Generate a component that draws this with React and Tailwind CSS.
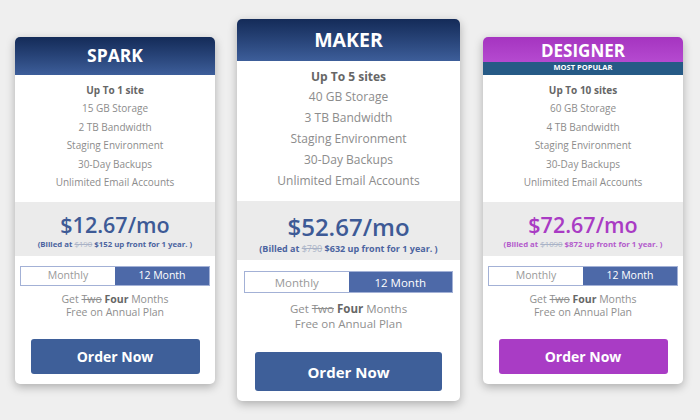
const plans = [
  {
    name: "SPARK",
    sites: "Up To 1 site",
    features: ["15 GB Storage", "2 TB Bandwidth", "Staging Environment", "30-Day Backups", "Unlimited Email Accounts"],
    price: "$12.67/mo",
    was: "$190",
    now: "$152",
  },
  {
    name: "MAKER",
    sites: "Up To 5 sites",
    features: ["40 GB Storage", "3 TB Bandwidth", "Staging Environment", "30-Day Backups", "Unlimited Email Accounts"],
    price: "$52.67/mo",
    was: "$790",
    now: "$632",
    big: true,
  },
  {
    name: "DESIGNER",
    sites: "Up To 10 sites",
    features: ["60 GB Storage", "4 TB Bandwidth", "Staging Environment", "30-Day Backups", "Unlimited Email Accounts"],
    price: "$72.67/mo",
    was: "$1090",
    now: "$872",
    popular: true,
  },
];

function Card({ plan }) {
  const big = plan.big;
  const purple = plan.popular;

  return (
    <div
      className={
        "flex flex-col overflow-hidden rounded-[5px] bg-white shadow-[0_3px_10px_rgba(0,0,0,0.28)] " +
        (big ? "w-[223px] " : "w-[200px] ") +
        (purple ? "ml-[1px]" : "")
      }
    >
      {purple ? (
        <div>
          <div className="flex h-[25px] items-center justify-center bg-gradient-to-b from-[#a534c0] to-[#b54ad0] pt-[3px] text-[17px] font-bold text-white">
            DESIGNER
          </div>
          <div className="flex h-[13px] items-center justify-center bg-[#265a86] text-[7.5px] font-bold text-white">
            MOST POPULAR
          </div>
        </div>
      ) : (
        <div
          className={
            "flex items-center justify-center bg-gradient-to-b from-[#142b58] to-[#3d5e9a] font-bold text-white " +
            (big ? "h-[42px] text-[19.5px]" : "h-[38px] text-[17.5px]")
          }
        >
          {plan.name}
        </div>
      )}

      <div
        className={
          "flex flex-col items-center text-[#8c8c8c] " +
          (big ? "pt-[6px] pb-[10px] text-[12px] leading-[20.8px]" : "pt-[6px] pb-[10px] text-[10px] leading-[18.5px]")
        }
      >
        <div className="font-bold text-[#666]">{plan.sites}</div>
        {plan.features.map((f) => (
          <div key={f}>{f}</div>
        ))}
      </div>

      <div
        className={
          "flex flex-col items-center bg-[#ebebeb] " +
          (big ? "h-[59px] pt-[10px]" : "h-[54px] pt-[9px]")
        }
      >
        <div
          className={
            "font-semibold " +
            (purple ? "text-[#a93bc4] " : "text-[#3d5a96] ") +
            (big ? "text-[24px] leading-[31px]" : "text-[21.5px] leading-[27px]")
          }
        >
          {plan.price}
        </div>
        <div
          className={
            "font-bold " +
            (purple ? "text-[#b35ccc] " : "text-[#4b64a0] ") +
            (big ? "mt-[1px] text-[9px] leading-[12px]" : "mt-[1px] text-[7.8px] leading-[11px]")
          }
        >
          (Billed at <span className="font-normal text-[#a9b2c6] line-through">{plan.was}</span> {plan.now} up front for 1 year. )
        </div>
      </div>

      <div
        className={
          "flex border border-[#a3b1d6] " +
          (big ? "mx-[7px] mt-[11px] h-[22px] text-[11.5px]" : "mx-[5px] mt-[10px] h-[20px] text-[10.5px]")
        }
      >
        <div className="flex flex-1 items-center justify-center bg-white text-[#999]">Monthly</div>
        <div className="flex flex-1 items-center justify-center bg-[#4d69a8] text-white">12 Month</div>
      </div>

      <div
        className={
          "text-center text-[#8f8f8f] " +
          (big ? "mt-[8px] text-[11.5px] leading-[15px]" : "mt-[7px] text-[10.5px] leading-[13px]")
        }
      >
        <div>
          Get <span className="line-through">Two</span> <span className="font-bold text-[#666]">Four</span> Months
        </div>
        <div>Free on Annual Plan</div>
      </div>

      <div className={"flex justify-center " + (big ? "mt-[21px] pb-[10px]" : "mt-[20px] pb-[10px]")}>
        <div
          className={
            "flex items-center justify-center rounded-[3px] font-bold text-white " +
            (purple ? "bg-[#a93cc5] " : "bg-[#3e5f99] ") +
            (big ? "h-[39px] w-[187px] text-[15px]" : "h-[35px] w-[169px] text-[14px]")
          }
        >
          Order Now
        </div>
      </div>
    </div>
  );
}

export default function App() {
  return (
    <div
      className="flex h-[420px] w-[700px] items-center gap-[22px] bg-[#efefef] pl-[15px]"
      style={{ fontFamily: '"Open Sans", "DejaVu Sans", sans-serif' }}
    >
      {plans.map((p) => (
        <Card key={p.name} plan={p} />
      ))}
    </div>
  );
}
